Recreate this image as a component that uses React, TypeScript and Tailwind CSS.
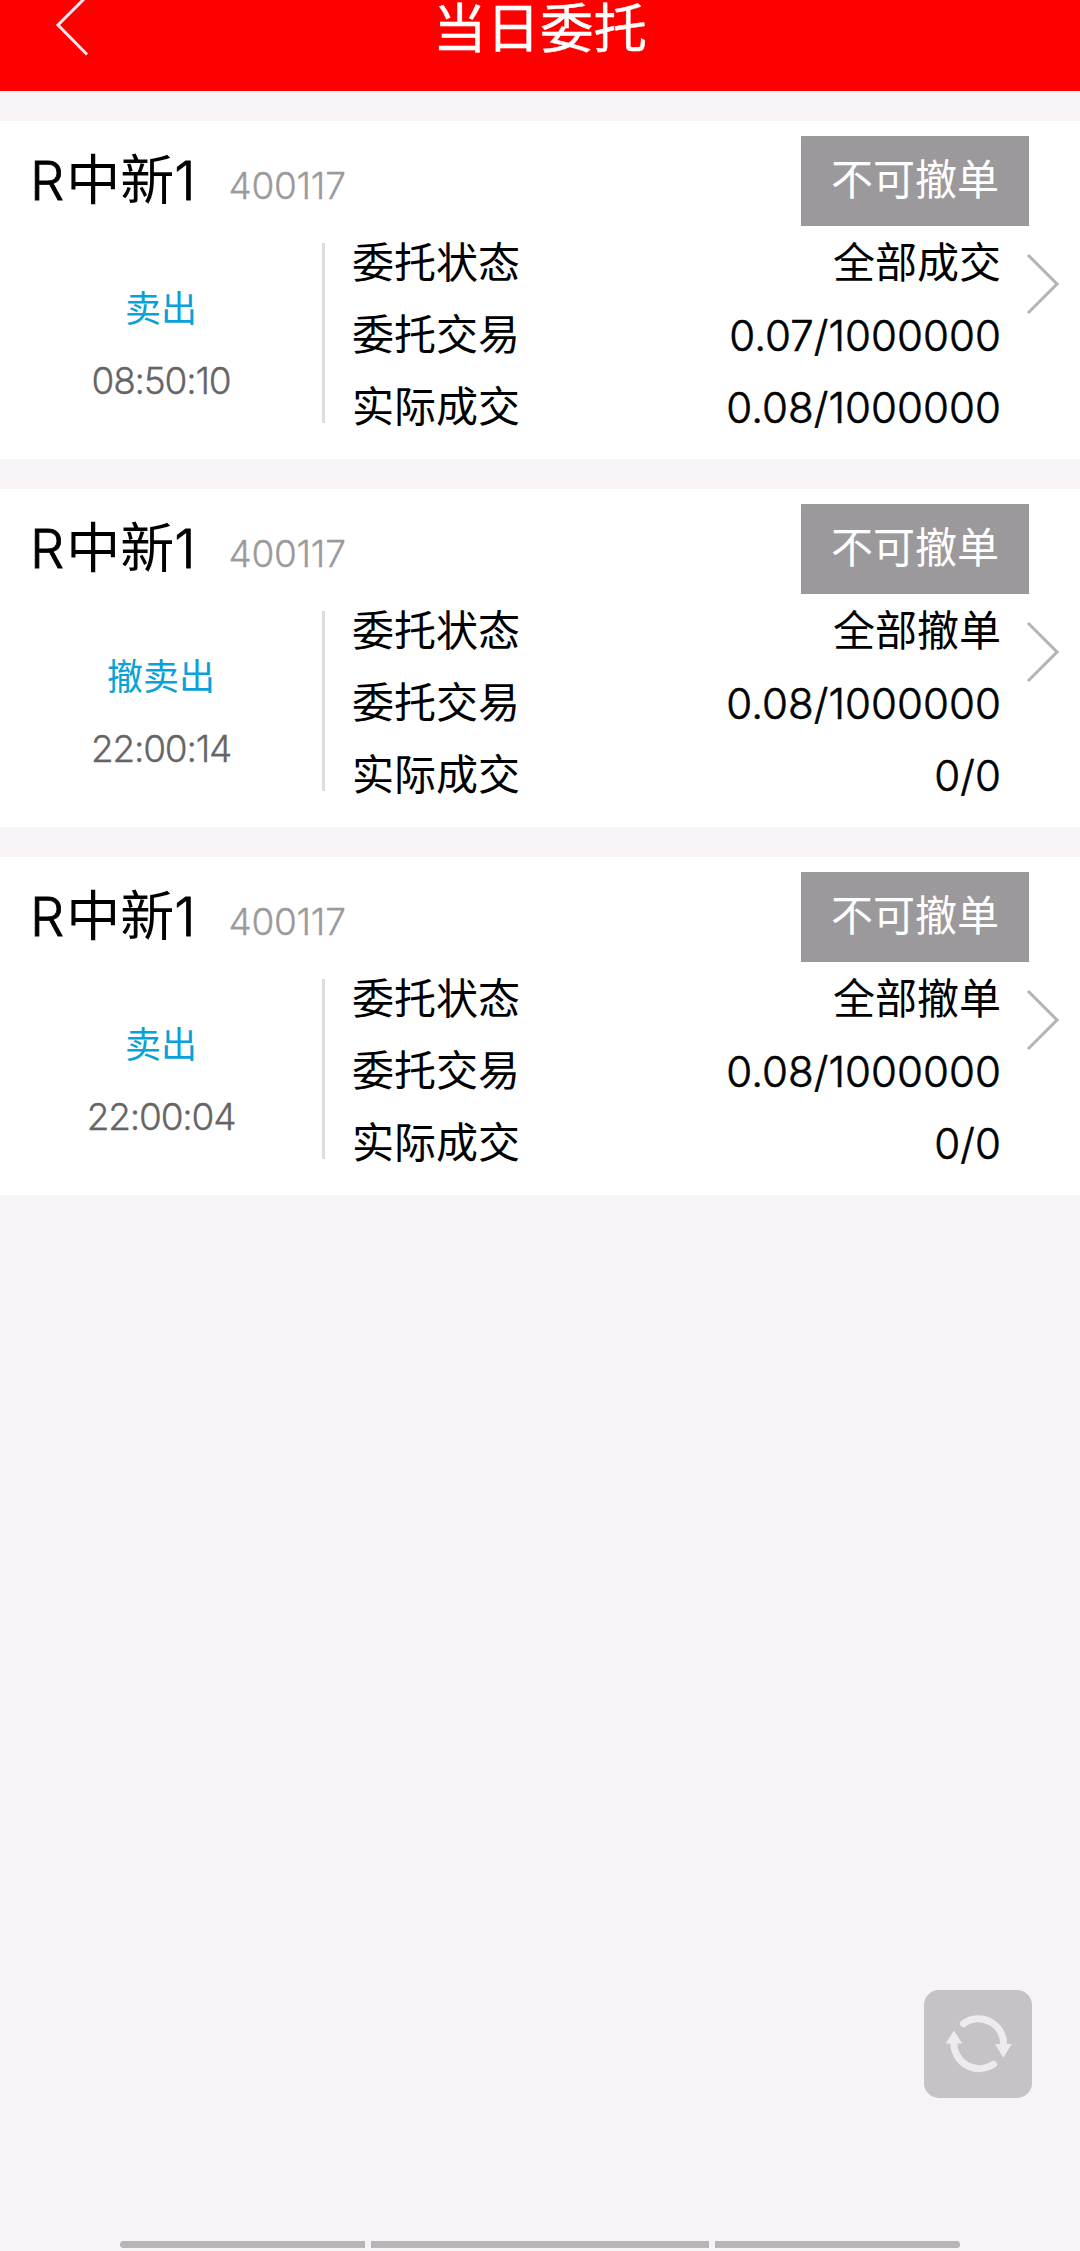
type Order = {
  side: string;
  time: string;
  status: string;
  ordered: string;
  filled: string;
};

const orders: Order[] = [
  { side: '卖出', time: '08:50:10', status: '全部成交', ordered: '0.07/1000000', filled: '0.08/1000000' },
  { side: '撤卖出', time: '22:00:14', status: '全部撤单', ordered: '0.08/1000000', filled: '0/0' },
  { side: '卖出', time: '22:00:04', status: '全部撤单', ordered: '0.08/1000000', filled: '0/0' },
];

function Row({ label, value, numeric = false }: { label: string; value: string; numeric?: boolean }) {
  return (
    <div className="flex h-[72px] items-center justify-between text-[42px] leading-[72px] text-black">
      <span>{label}</span>
      <span className={numeric ? 'translate-y-px font-light tracking-[0.05px] [-webkit-text-stroke:0.6px_black]' : ''}>{value}</span>
    </div>
  );
}

function OrderCard({ order }: { order: Order }) {
  return (
    <section className="h-[338px] bg-white pt-[15px]">
      <div className="flex h-[90px] items-center justify-between pr-[51px] pl-[30px]">
        <div className="flex items-baseline">
          <h2 className="text-[54px] leading-[90px] text-black">
            <span className="mr-[2px] font-light [-webkit-text-stroke:0.8px_black]">R</span>
            <span>中新</span>
            <span className="font-light [-webkit-text-stroke:0.8px_black]">1</span>
          </h2>
          <span className="mb-[2px] ml-[33px] -translate-y-px text-[37px] leading-[60px] font-light tracking-[-0.3px] text-[#9c9a9c] [-webkit-text-stroke:0.3px_#9c9a9c]">
            400117
          </span>
        </div>
        <button className="h-[90px] w-[228px] bg-[#9c999c] pb-[2px] text-[42px] leading-[88px] text-white">不可撤单</button>
      </div>
      <div className="flex">
        <div className="w-[322px] pt-[47px] text-center text-[36px] leading-[72px]">
          <div className="text-[#08a2d8]">{order.side}</div>
          <div className="text-[37px] font-light tracking-[-1.2px] text-[#666566] [-webkit-text-stroke:0.3px_#666566]">{order.time}</div>
        </div>
        <div className="mt-[17px] h-[180px] w-[3px] bg-[#dedbde]" />
        <div className="ml-[27px] w-[649px] pt-px">
          <Row label="委托状态" value={order.status} />
          <Row label="委托交易" value={order.ordered} numeric />
          <Row label="实际成交" value={order.filled} numeric />
        </div>
        <svg className="mt-[27px] ml-[25px] h-[62px] w-[36px]" viewBox="0 0 36 62" fill="none" stroke="#b5b3b5" strokeWidth="3">
          <path d="M2 2 31 31 2 60" />
        </svg>
      </div>
    </section>
  );
}

export default function App() {
  return (
    <div className="flex h-[2251px] w-[1080px] flex-col overflow-hidden bg-[#f7f3f7] font-['Inter','Noto_Sans_CJK_SC',sans-serif] font-normal">
      <header className="grid h-[91px] shrink-0 grid-cols-[1fr_auto_1fr] bg-[#ff0000] text-white">
        <svg className="ml-[54px] h-[58px] w-[36px]" viewBox="0 0 36 58" fill="none" stroke="#ffe9ee" strokeWidth="3">
          <path d="M35-6 4 25 33 54.5" />
        </svg>
        <h1 className="h-[58px] font-['Liberation_Sans','Noto_Sans_CJK_SC',sans-serif] text-[53.5px] leading-[59px] font-normal [-webkit-text-stroke:0.4px_white]">当日委托</h1>
      </header>
      <main className="flex flex-col gap-[30px] pt-[30px]">
        {orders.map((order) => (
          <OrderCard key={order.time} order={order} />
        ))}
      </main>
      <button className="mt-auto mr-[48px] mb-[143px] h-[108px] w-[108px] shrink-0 self-end rounded-[15px] bg-[#c6c2c6]" aria-label="刷新">
        <svg className="h-[108px] w-[108px]" viewBox="0 0 108 108" fill="none" stroke="#eeeaee" strokeWidth="7" strokeLinecap="round">
          <path d="M39.5 33.6A25.3 25.3 0 0 1 79.6 56" />
          <path d="M69.5 74.2A25.3 25.3 0 0 1 29.9 52" />
          <path d="M71 54H87.8L79.4 67.7ZM21.5 53.5H38.2L30 40.5Z" fill="#eeeaee" stroke="none" />
        </svg>
      </button>
      <div className="flex h-[10px] shrink-0 justify-center gap-[6px]">
        <i className="h-[7px] w-[245px] rounded-l-full bg-[#b5b6b5]" />
        <i className="h-[7px] w-[338px] bg-[#b5b6b5]" />
        <i className="h-[7px] w-[245px] rounded-r-full bg-[#b5b6b5]" />
      </div>
    </div>
  );
}
